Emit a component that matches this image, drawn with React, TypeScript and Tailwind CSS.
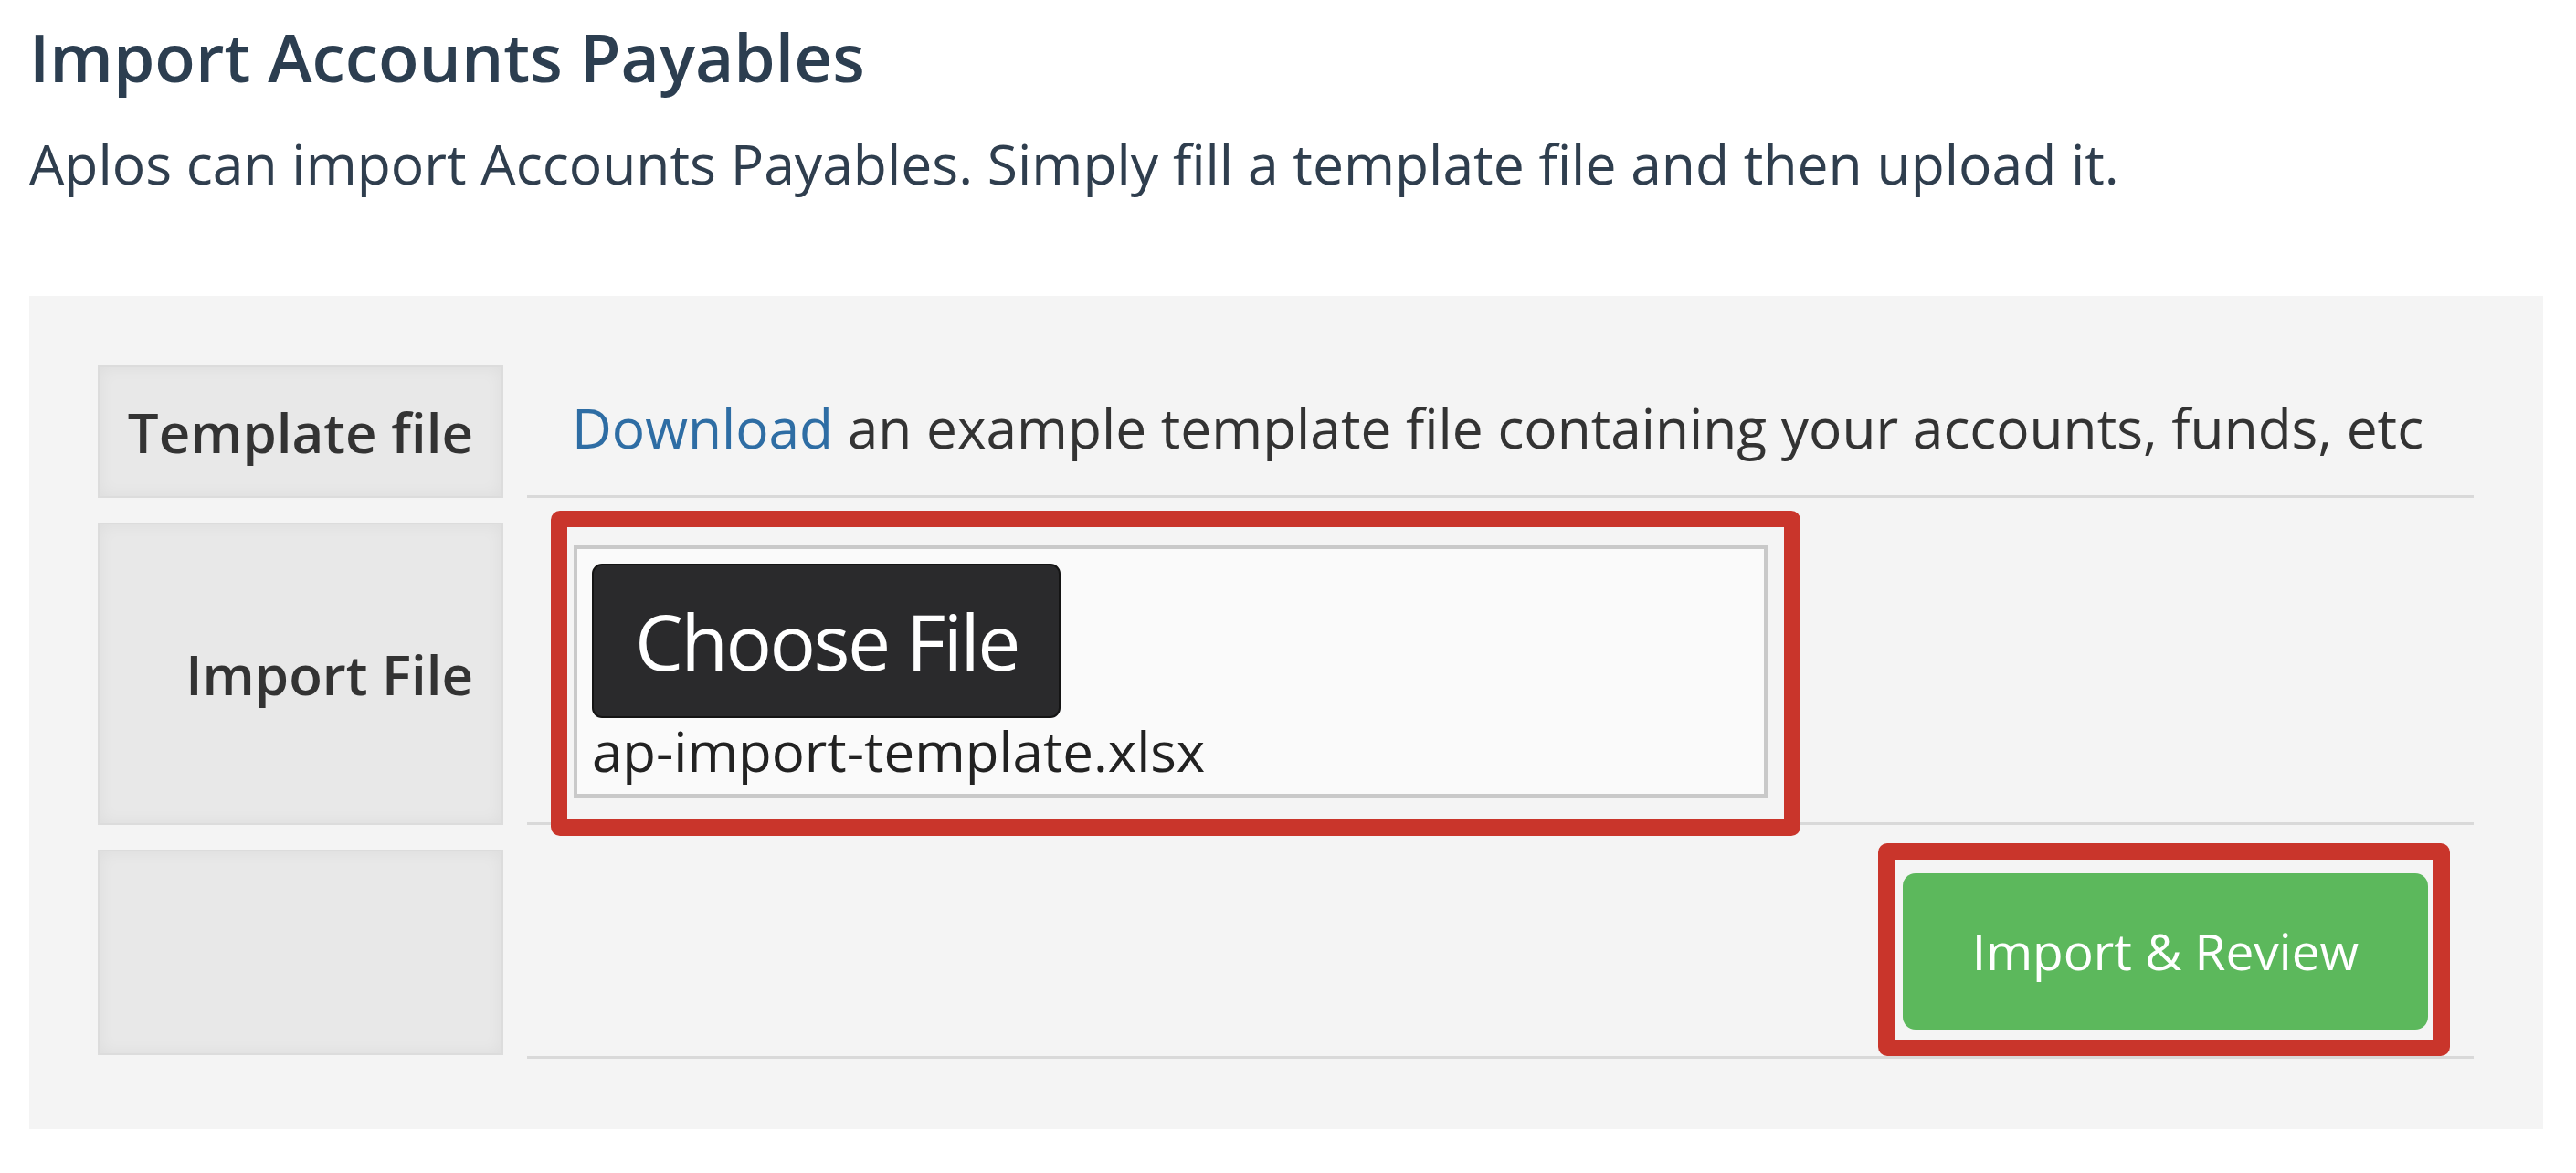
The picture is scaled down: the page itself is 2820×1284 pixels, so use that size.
const font = { fontFamily: '"Open Sans", "Noto Sans", sans-serif' };

const LabelCell = ({ label, h }: { label?: string; h: string }) => (
  <div
    className={`${h} flex items-center justify-end pr-[31px] bg-[#e8e8e8] border-2 border-[#dcdcdc] shadow-[inset_0_0_18px_rgba(0,0,0,0.05)]`}
  >
    {label && (
      <span className="text-[60px] leading-[72px] font-semibold text-[#333333]">
        {label}
      </span>
    )}
  </div>
);

export default function App() {
  return (
    <div className="min-h-screen bg-white px-[32px]" style={font}>
      <h1 className="pt-[18px] text-[73px] leading-[88px] font-semibold text-[#2c3e50]">
        Import Accounts Payables
      </h1>
      <p className="mt-[37px] text-[60.6px] leading-[72px] text-[#2f3e4e]">
        Aplos can import Accounts Payables. Simply fill a template file and then upload it.
      </p>

      <div className="mt-[109px] w-[2752px] bg-[#f4f4f4] pt-[76px] pl-[75px] pr-[76px] pb-[77px]">
        <div className="grid grid-cols-[444px_1fr] gap-x-[26px] gap-y-[27px]">
          {/* template row */}
          <LabelCell label="Template file" h="h-[145px]" />
          <div className="flex items-center pl-[49px] pb-[6px] border-b-[3px] border-[#d9d9d9]">
            <p className="text-[60.4px] leading-[72px] text-[#333333] whitespace-nowrap">
              <a className="text-[#2e6da4]">Download</a> an example template file containing your
              accounts, funds, etc
            </p>
          </div>

          {/* file row */}
          <LabelCell label="Import File" h="h-[331px]" />
          <div className="border-b-[3px] border-[#d9d9d9]">
            <div className="ml-[26px] -mt-[13px] -mb-[16px] w-[1368px] rounded-[10px] border-[18px] border-[#c9352b] pl-[7px] pt-[20px] pr-[18px] pb-[24px]">
              <div className="border-4 border-[#c9c9c9] bg-[#fafafa] pt-[16px] pl-[16px] pb-[11px]">
                <button className="h-[169px] rounded-[11px] border-2 border-[#141414] bg-[#2a2a2c] pl-[45px] pr-[44px] text-[84px] leading-none tracking-[-2.5px] text-white">
                  Choose File
                </button>
                <div className="text-[60px] leading-[72px] text-[#222222]">
                  ap-import-template.xlsx
                </div>
              </div>
            </div>
          </div>

          {/* action row */}
          <LabelCell h="h-[225px]" />
          <div className="flex justify-end pr-[26px] border-b-[3px] border-[#d9d9d9]">
            <div className="-mt-[7px] h-fit rounded-[10px] border-[18px] border-[#c9352b] pl-[9px] pt-[15px] pr-[6px] pb-[11px]">
              <button className="flex h-[171px] w-[575px] items-center justify-center rounded-[14px] bg-[#5cb85c] text-[55px] text-white">
                Import &amp; Review
              </button>
            </div>
          </div>
        </div>
      </div>
    </div>
  );
}
